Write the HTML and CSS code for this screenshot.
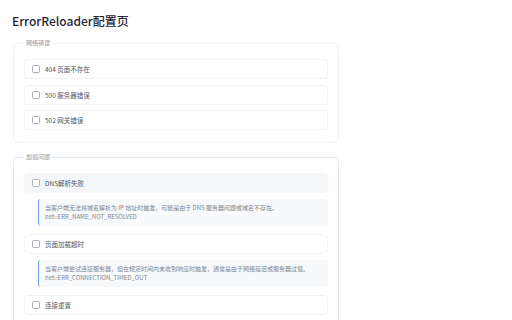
FILE: index.html
```html
<!DOCTYPE html>
<html lang="zh-CN">
<head>
<meta charset="utf-8">
<title>ErrorReloader配置页</title>
<link rel="stylesheet" href="styles.css">
</head>
<body>
<div class="page">
  <h1 class="title">ErrorReloader配置页</h1>

  <fieldset class="group">
    <legend class="group-label">网络错误</legend>
    <label class="item"><input type="checkbox" class="check"><span>404 页面不存在</span></label>
    <label class="item"><input type="checkbox" class="check"><span>500 服务器错误</span></label>
    <label class="item"><input type="checkbox" class="check"><span>502 网关错误</span></label>
  </fieldset>

  <fieldset class="group group-active">
    <legend class="group-label">加载问题</legend>
    <label class="item item-hover"><input type="checkbox" class="check"><span>DNS解析失败</span></label>
    <div class="desc">当客户端无法将域名解析为 IP 地址时触发，可能是由于 DNS 服务器问题或域名不存在。<br>net::ERR_NAME_NOT_RESOLVED</div>
    <label class="item"><input type="checkbox" class="check"><span>页面加载超时</span></label>
    <div class="desc">当客户端尝试连接服务器，但在规定时间内未收到响应时触发，通常是由于网络延迟或服务器过载。<br>net::ERR_CONNECTION_TIMED_OUT</div>
    <label class="item"><input type="checkbox" class="check"><span>连接重置</span></label>
  </fieldset>
</div>
</body>
</html>
```

FILE: styles.css
```css
html, body {
  margin: 0;
  padding: 0;
}

body {
  background: #fafbfc;
  font-family: "Noto Sans CJK SC", "Noto Sans", sans-serif;
  overflow: hidden;
}

.page {
  background: #ffffff;
  min-height: 320px;
  box-sizing: border-box;
  padding: 11px 12px 0 12px;
  box-shadow: 0 1px 3px rgba(0, 0, 0, 0.04);
}

.title {
  margin: 0 0 8px 0;
  font-size: 12px;
  line-height: 20px;
  font-weight: 500;
  color: #1f2636;
}

.group {
  width: 326px;
  box-sizing: border-box;
  margin: 0 0 10px 1px;
  padding: 12px 10px 12px 10px;
  border: 1px solid #eff1f4;
  border-radius: 6px;
}

.group-active {
  border-color: #dfe8f8;
}

.group-label {
  padding: 0 2px;
  font-size: 6px;
  line-height: 8px;
  color: #90959d;
}

.item {
  display: flex;
  align-items: center;
  gap: 5px;
  height: 20px;
  box-sizing: border-box;
  padding: 0 7px;
  margin-bottom: 5.5px;
  border: 1px solid #f0f2f5;
  border-radius: 4px;
  font-size: 6.5px;
  color: #50555d;
}

.item:last-child {
  margin-bottom: 0;
}

.item-hover {
  background: #f4f6f9;
  border-color: #f4f6f9;
}

.check {
  appearance: none;
  -webkit-appearance: none;
  width: 8px;
  height: 8px;
  margin: 0;
  border: 1px solid #adb1b7;
  border-radius: 1.5px;
  background: #ffffff;
  box-sizing: border-box;
  flex: none;
}

.desc {
  margin: 6px 0 7.5px 14px;
  padding: 5px 6px;
  border-left: 1px solid #6b9be9;
  border-radius: 3px;
  background: #f8f9fb;
  font-size: 6px;
  line-height: 8.7px;
  color: #80858c;
}
```
